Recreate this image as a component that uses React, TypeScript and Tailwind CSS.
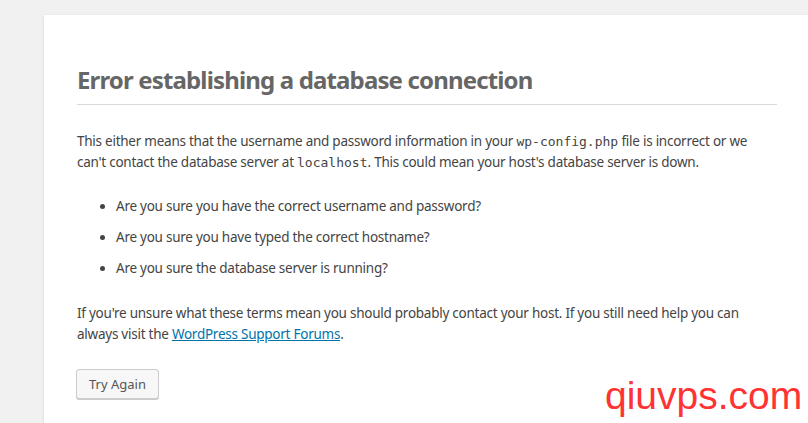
import React from "react";

export default function App() {
  const body = { fontFamily: '"Noto Sans", "Open Sans", sans-serif' };
  const mono = { fontFamily: '"DejaVu Sans Mono", "Liberation Mono", monospace' };
  return (
    <div className="relative w-[808px] h-[423px] overflow-hidden bg-[#f1f1f1] pt-[15px] pl-[44px]" style={body}>
      <div className="bg-white h-[420px] w-[800px] shadow-[0_1px_3px_rgba(0,0,0,0.13)] pl-[33px] pt-[49px] text-[#444] text-[13.5px] tracking-[-0.25px]">
        <div className="w-[700px]">
          <h1 className="text-[24px] leading-[32px] font-bold text-[#666] tracking-[-0.85px] border-b border-[#dadada] pb-[8px]">
            Error establishing a database connection
          </h1>
          <p className="mt-[26px] leading-[21px]">
            This either means that the username and password information in your{" "}
            <code className="text-[13px] tracking-normal" style={mono}>wp-config.php</code> file is incorrect or we can't contact the database server at{" "}
            <code className="text-[13px] tracking-normal" style={mono}>localhost</code>. This could mean your host's database server is down.
          </p>
          <ul className="mt-[23px] list-disc pl-[39px] leading-[21px] flex flex-col gap-[10px]">
            <li>Are you sure you have the correct username and password?</li>
            <li>Are you sure you have typed the correct hostname?</li>
            <li>Are you sure the database server is running?</li>
          </ul>
          <p className="mt-[24px] leading-[21px]">
            If you're unsure what these terms mean you should probably contact your host. If you still need help you can always visit the{" "}
            <a className="text-[#0073aa] underline" href="#">WordPress Support Forums</a>.
          </p>
          <button className="mt-[24px] -ml-px h-[30px] px-[12px] text-[13px] tracking-normal text-[#555] bg-[#f7f7f7] border border-[#ccc] rounded-[3px] shadow-[0_1px_0_#ccc] leading-[28px]">
            Try Again
          </button>
        </div>
      </div>
      <div
        className="absolute left-[605px] top-[376px] text-[39px] leading-none text-[#f33]"
        style={{ fontFamily: '"Liberation Sans", Arial, sans-serif' }}
      >
        qiuvps.com
      </div>
    </div>
  );
}
